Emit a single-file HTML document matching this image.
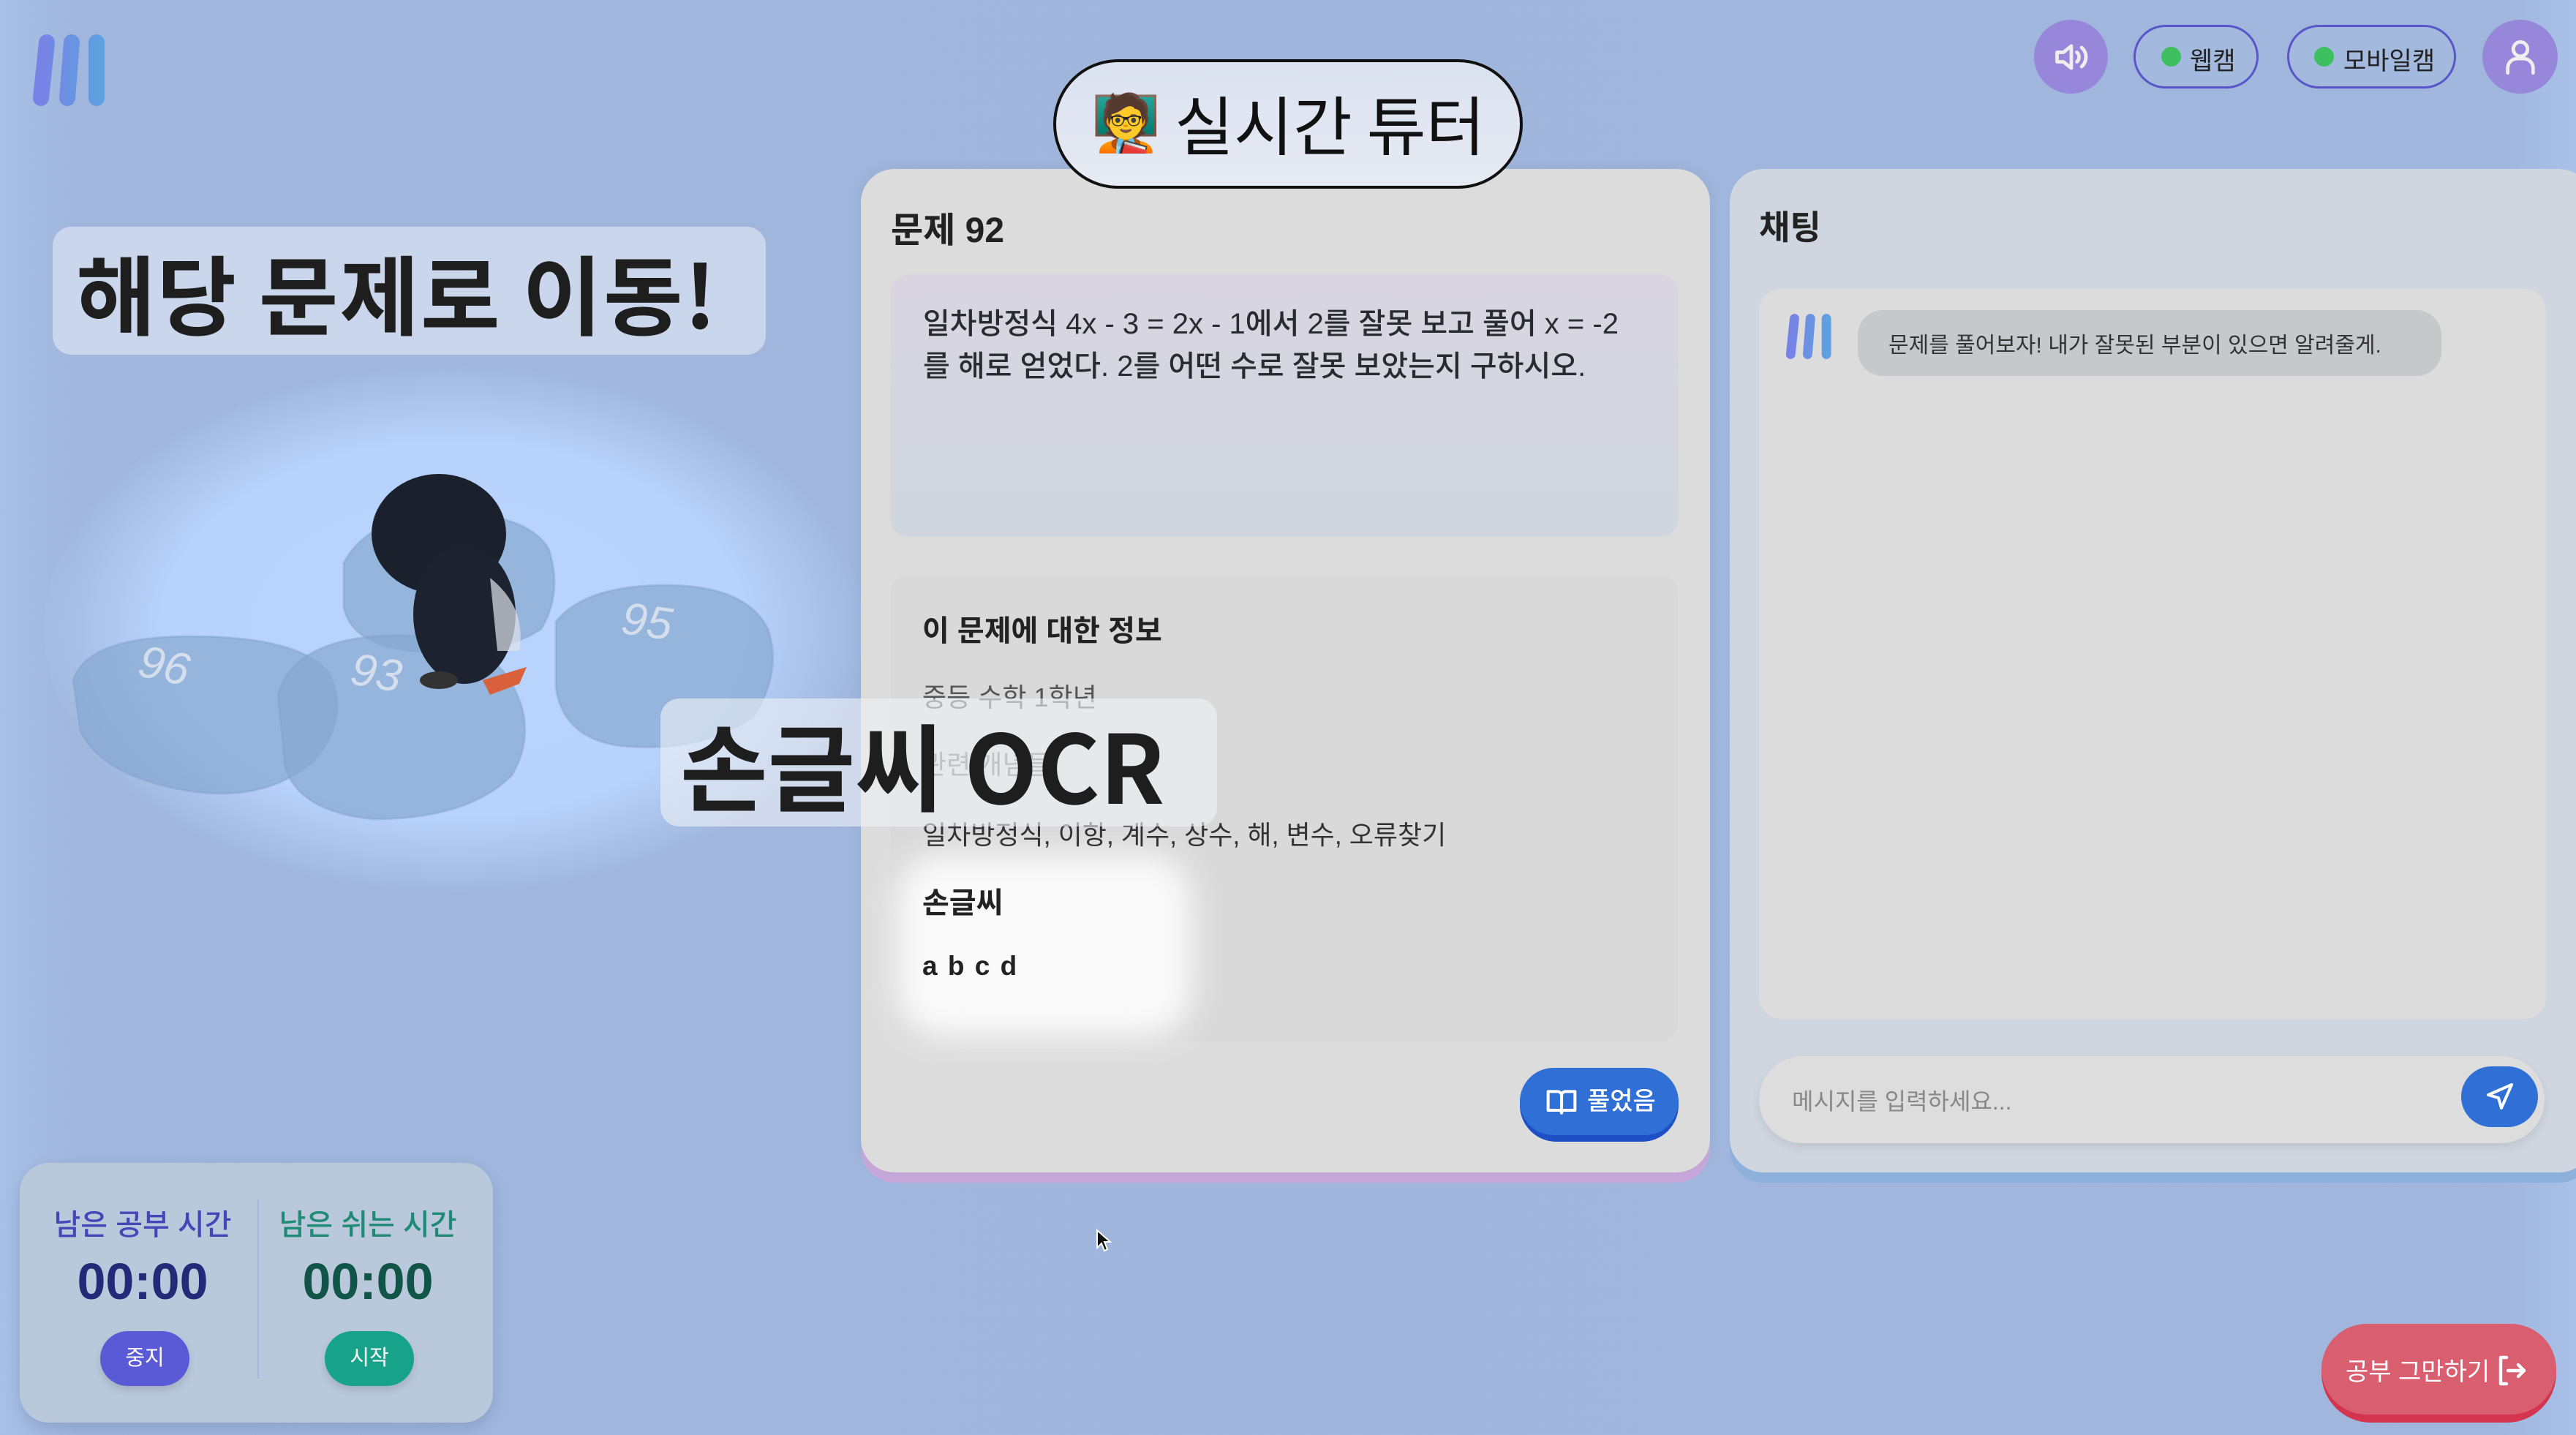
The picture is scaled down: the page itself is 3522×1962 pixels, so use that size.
<!DOCTYPE html>
<html><head><meta charset="utf-8"><style>
*{margin:0;padding:0;box-sizing:border-box}
body{width:3522px;height:1962px;overflow:hidden;background:linear-gradient(90deg,#a9c0e6 0,#a0b6dd 3%,#9fb5dc 50%,#a0b6dd 97%,#a9c0e8 100%);font-family:"Liberation Sans","Noto Sans CJK KR",sans-serif;position:relative;color:#222}
.abs{position:absolute}
.t{white-space:nowrap}
</style></head><body>
<!-- logo -->
<svg class="abs" style="left:40px;top:44px" width="112" height="104" viewBox="0 0 112 104">
<defs><linearGradient id="lg" gradientUnits="userSpaceOnUse" x1="0" y1="0" x2="112" y2="0"><stop offset="0" stop-color="#7b7ee6"/><stop offset="1" stop-color="#5aa6e0"/></linearGradient></defs>
<g stroke="url(#lg)" stroke-width="22" stroke-linecap="round"><line x1="24" y1="14" x2="16" y2="90"/><line x1="58" y1="14" x2="52" y2="90"/><line x1="92" y1="14" x2="92" y2="90"/></g></svg>

<!-- glow -->
<div class="abs" style="left:60px;top:500px;width:1120px;height:720px;border-radius:50%;background:radial-gradient(ellipse at center,#b9d4fc 0,#b8d3fb 50%,rgba(170,195,235,0) 72%)"></div>

<!-- ice blocks -->
<svg class="abs" style="left:80px;top:600px" width="1100" height="560" viewBox="0 0 1100 560">
<g fill="#86a8d0" fill-opacity="0.7" stroke="#7fa0c8" stroke-opacity="0.4" stroke-width="3">
<path d="M390 170 Q420 110 520 100 Q640 100 670 150 Q690 210 660 260 Q600 300 480 290 Q400 280 390 230 Z"/>
<path d="M20 330 Q40 270 180 270 Q330 270 370 320 Q400 380 350 440 Q280 500 170 480 Q60 460 30 400 Z"/>
<path d="M300 350 Q320 280 430 270 Q560 260 610 320 Q660 390 620 460 Q560 520 430 520 Q330 510 310 450 Z"/>
<path d="M680 250 Q720 200 830 200 Q940 200 970 260 Q990 320 950 380 Q880 430 770 420 Q690 410 680 340 Z"/>
</g>
<g fill="#dfe6ef" font-family="Liberation Sans" font-style="italic" font-size="62" opacity="0.85">
<text x="110" y="330" transform="rotate(12 140 310)">96</text>
<text x="400" y="340" transform="rotate(10 430 320)">93</text>
<text x="770" y="270" transform="rotate(8 800 250)">95</text>
</g>
<!-- penguin -->
<ellipse cx="520" cy="130" rx="92" ry="82" fill="#1a202c"/>
<ellipse cx="555" cy="240" rx="70" ry="95" fill="#1c2230"/>
<path d="M590 190 Q640 230 630 290 L600 290 Z" fill="#dfe3ea" opacity="0.7"/>
<path d="M580 330 L640 312 L630 335 L590 350Z" fill="#d8603a"/>
<ellipse cx="520" cy="330" rx="26" ry="12" fill="#333"/>
</svg>

<!-- 해당 문제로 이동 -->
<div class="abs" style="left:72px;top:310px;width:975px;height:175px;border-radius:26px;background:rgba(215,224,240,0.75)"></div>
<div class="abs t" style="left:104px;top:318px;font-size:118px;font-weight:bold;color:#1e1e1e;font-family:'Noto Sans CJK KR',sans-serif;letter-spacing:2px;line-height:160px">해당 문제로 이동!</div>

<!-- center panel -->
<div class="abs" style="left:1177px;top:231px;width:1161px;height:1386px;border-radius:46px;background:#c9a9dc"></div>
<div class="abs" style="left:1177px;top:231px;width:1161px;height:1372px;border-radius:46px;background:#dcdcdc;box-shadow:0 0 20px rgba(0,0,0,0.05)"></div>
<div class="abs t" style="left:1218px;top:275px;font-size:48px;font-weight:bold;color:#222">문제 92</div>
<div class="abs" style="left:1217px;top:375px;width:1078px;height:359px;border-radius:26px;background:linear-gradient(180deg,#d8d5e0,#d0d6de)"></div>
<div class="abs" style="left:1262px;top:414px;font-size:40px;line-height:58px;color:#2a2a33;font-weight:500">일차방정식 4x - 3 = 2x - 1에서 2를 잘못 보고 풀어 x = -2<br>를 해로 얻었다. 2를 어떤 수로 잘못 보았는지 구하시오.</div>
<div class="abs" style="left:1217px;top:786px;width:1078px;height:638px;border-radius:26px;background:#d9d9d9"></div>
<div class="abs" style="left:1225px;top:1168px;width:405px;height:250px;border-radius:60px;background:#fafafa;filter:blur(22px)"></div>
<div class="abs t" style="left:1261px;top:830px;font-size:40px;font-weight:600;color:#222">이 문제에 대한 정보</div>
<div class="abs t" style="left:1261px;top:925px;font-size:36px;color:#555">중등 수학 1학년</div>
<div class="abs t" style="left:1261px;top:1017px;font-size:36px;color:#777">관련 개념들</div>
<div class="abs t" style="left:1261px;top:1113px;font-size:36px;color:#333">일차방정식, 이항, 계수, 상수, 해, 변수, 오류찾기</div>
<div class="abs t" style="left:1261px;top:1202px;font-size:40px;font-weight:600;color:#222">손글씨</div>
<div class="abs t" style="left:1261px;top:1300px;font-size:37px;font-weight:bold;color:#222;letter-spacing:2px">a b c d</div>
<div class="abs" style="left:2078px;top:1460px;width:217px;height:101px;border-radius:50px;background:#1f4fc4"></div>
<div class="abs" style="left:2078px;top:1460px;width:217px;height:92px;border-radius:50px;background:#2f6fd6"></div>
<svg class="abs" style="left:2113px;top:1485px" width="44" height="44" viewBox="0 0 24 24" fill="none" stroke="#fff" stroke-width="2.2" stroke-linejoin="round"><path d="M2 4h7a3 3 0 0 1 3 3v13a2 2 0 0 0-2-2H2z"/><path d="M22 4h-7a3 3 0 0 0-3 3v13a2 2 0 0 1 2-2h8z"/></svg>
<div class="abs t" style="left:2170px;top:1478px;font-size:34px;color:#fff;font-weight:500">풀었음</div>

<!-- OCR overlay -->
<div class="abs" style="left:903px;top:955px;width:761px;height:175px;border-radius:26px;background:rgba(238,240,246,0.62)"></div>
<div class="abs t" style="left:930px;top:958px;font-size:130px;font-weight:bold;color:#1e1e1e;font-family:'Noto Sans CJK KR',sans-serif;line-height:170px">손글씨 OCR</div>

<!-- tutor pill -->
<div class="abs" style="left:1440px;top:81px;width:642px;height:177px;border-radius:90px;border:4px solid #111;background:linear-gradient(180deg,#dbe2f0,#e6eaf3)"></div>
<div class="abs t" style="left:1492px;top:104px;font-size:76px;line-height:130px">🧑‍🏫</div>
<div class="abs t" style="left:1606px;top:100px;font-size:88px;line-height:136px;color:#111;font-family:'Noto Sans CJK KR',sans-serif">실시간 튜터</div>

<!-- chat panel -->
<div class="abs" style="left:2365px;top:231px;width:1180px;height:1386px;border-radius:46px;background:#8eb1dc"></div>
<div class="abs" style="left:2365px;top:231px;width:1180px;height:1372px;border-radius:46px;background:#cfd6e0"></div>
<div class="abs t" style="left:2405px;top:275px;font-size:46px;font-weight:bold;color:#222">채팅</div>
<div class="abs" style="left:2405px;top:395px;width:1076px;height:998px;border-radius:30px;background:#dcdcdc"></div>
<svg class="abs" style="left:2438px;top:425px" width="72" height="70" viewBox="0 0 112 104"><g stroke="url(#lg)" stroke-width="20" stroke-linecap="round"><line x1="24" y1="14" x2="16" y2="90"/><line x1="58" y1="14" x2="52" y2="90"/><line x1="92" y1="14" x2="92" y2="90"/></g></svg>
<div class="abs" style="left:2540px;top:424px;width:798px;height:90px;border-radius:34px;background:#c7c8cc"></div>
<div class="abs t" style="left:2582px;top:447px;font-size:30px;color:#333">문제를 풀어보자! 내가 잘못된 부분이 있으면 알려줄게.</div>
<div class="abs" style="left:2405px;top:1444px;width:1074px;height:119px;border-radius:60px;background:#dddddd;box-shadow:0 6px 12px rgba(0,0,0,0.08)"></div>
<div class="abs t" style="left:2450px;top:1481px;font-size:32px;color:#888">메시지를 입력하세요...</div>
<div class="abs" style="left:3365px;top:1458px;width:105px;height:83px;border-radius:42px;background:#2f6fd6"></div>
<svg class="abs" style="left:3394px;top:1474px" width="48" height="50" viewBox="0 0 24 24" fill="none" stroke="#fff" stroke-width="2" stroke-linejoin="round"><path d="M20 4 L4 11 L11 13 L13 20 Z"/></svg>

<!-- top right controls -->
<div class="abs" style="left:2781px;top:27px;width:101px;height:101px;border-radius:50%;background:#9787db"></div>
<svg class="abs" style="left:2804px;top:52px" width="56" height="52" viewBox="0 0 24 24" fill="none" stroke="#eee" stroke-width="2.2" stroke-linecap="round" stroke-linejoin="round"><path d="M3 9h4l5-4v14l-5-4H3z"/><path d="M15.5 9a4 4 0 0 1 0 6"/><path d="M18.5 6a8 8 0 0 1 0 12"/></svg>
<div class="abs" style="left:2917px;top:34px;width:171px;height:87px;border-radius:44px;border:3px solid #5a55c8;background:#a4b9de"></div>
<div class="abs" style="left:2955px;top:64px;width:27px;height:27px;border-radius:50%;background:#3fc060"></div>
<div class="abs t" style="left:2994px;top:56px;font-size:34px;color:#222">웹캠</div>
<div class="abs" style="left:3127px;top:34px;width:231px;height:87px;border-radius:44px;border:3px solid #5a55c8;background:#a4b9de"></div>
<div class="abs" style="left:3164px;top:64px;width:27px;height:27px;border-radius:50%;background:#3fc060"></div>
<div class="abs t" style="left:3204px;top:56px;font-size:34px;color:#222">모바일캠</div>
<div class="abs" style="left:3394px;top:27px;width:103px;height:101px;border-radius:50%;background:#9787db"></div>
<svg class="abs" style="left:3420px;top:50px" width="52" height="56" viewBox="0 0 24 24" fill="none" stroke="#eee" stroke-width="2.2" stroke-linecap="round"><circle cx="12" cy="7" r="4.5"/><path d="M4 22v-3a6 6 0 0 1 6-6h4a6 6 0 0 1 6 6v3"/></svg>

<!-- timer card -->
<div class="abs" style="left:27px;top:1590px;width:647px;height:355px;border-radius:40px;background:#bac8dc;box-shadow:0 8px 20px rgba(60,80,120,0.2)"></div>
<div class="abs" style="left:352px;top:1640px;width:2px;height:245px;background:#a8b4dc"></div>
<div class="abs t" style="left:45px;top:1642px;width:300px;text-align:center;font-size:40px;font-weight:500;color:#4646b8">남은 공부 시간</div>
<div class="abs t" style="left:353px;top:1642px;width:300px;text-align:center;font-size:40px;font-weight:500;color:#1f8a76">남은 쉬는 시간</div>
<div class="abs t" style="left:45px;top:1712px;width:300px;text-align:center;font-size:70px;font-weight:bold;color:#252a78">00:00</div>
<div class="abs t" style="left:353px;top:1712px;width:300px;text-align:center;font-size:70px;font-weight:bold;color:#115548">00:00</div>
<div class="abs" style="left:137px;top:1820px;width:122px;height:75px;border-radius:40px;background:#5a5ad6;box-shadow:0 6px 10px rgba(0,0,0,0.12);color:#fff;font-size:29px;text-align:center;line-height:75px">중지</div>
<div class="abs" style="left:444px;top:1820px;width:122px;height:75px;border-radius:40px;background:#17a38a;box-shadow:0 6px 10px rgba(0,0,0,0.12);color:#fff;font-size:29px;text-align:center;line-height:75px">시작</div>

<!-- stop button -->
<div class="abs" style="left:3174px;top:1810px;width:321px;height:135px;border-radius:68px;background:#d4344e"></div>
<div class="abs" style="left:3174px;top:1810px;width:321px;height:124px;border-radius:68px;background:#d95f70"></div>
<div class="abs t" style="left:3207px;top:1848px;font-size:34px;color:#fff">공부 그만하기</div>
<svg class="abs" style="left:3408px;top:1850px" width="50" height="48" viewBox="0 0 24 24" fill="none" stroke="#fff" stroke-width="2.2" stroke-linecap="round" stroke-linejoin="round"><path d="M9 3H5v18h4"/><path d="M10 12h11"/><path d="M17 8l4 4-4 4"/></svg>

<!-- cursor -->
<svg class="abs" style="left:1498px;top:1680px" width="22" height="32" viewBox="0 0 11 16"><path d="M1 1v12l3-3 2 5 2-1-2-5h4z" fill="#111" stroke="#fff" stroke-width="1"/></svg>
</body></html>
